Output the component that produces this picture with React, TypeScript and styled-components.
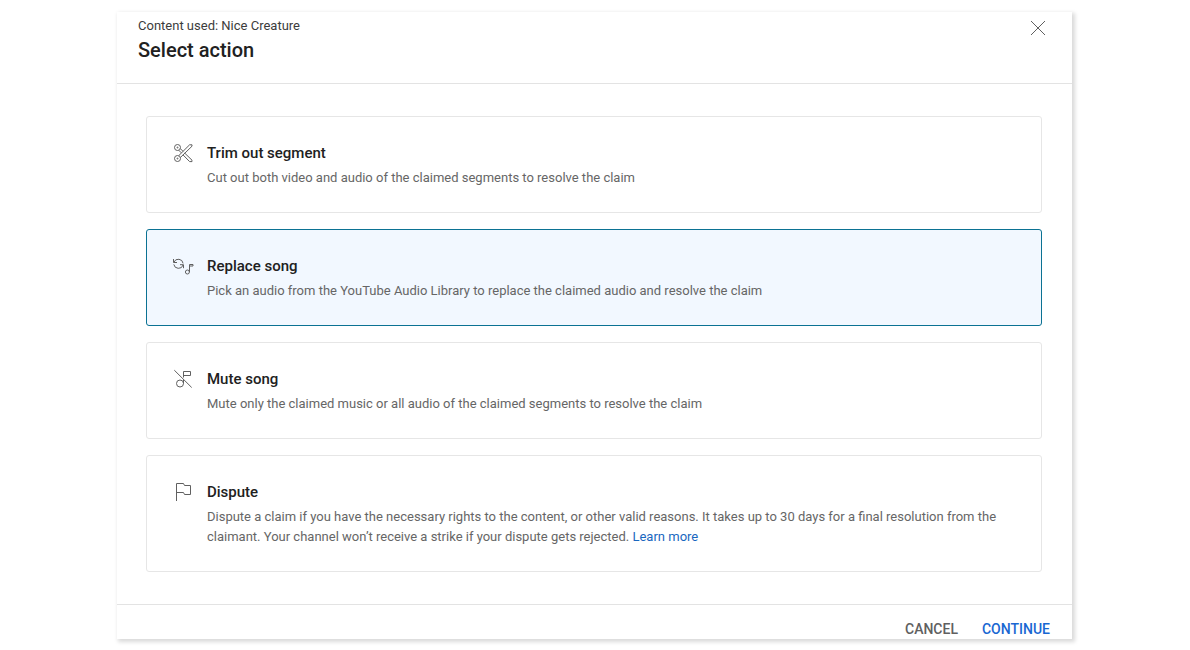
import React, { useState } from "react";
import styled, { createGlobalStyle } from "styled-components";

const GlobalStyle = createGlobalStyle`
  *, *::before, *::after { box-sizing: border-box; }
  body {
    margin: 0;
    background: #fff;
    color: #212121;
    font-family: Roboto, "Liberation Sans", sans-serif;
    font-size: 13px;
    line-height: 20px;
  }
`;

const Page = styled.main`
  padding: 12px 17px 10px 16px;
`;

const Dialog = styled.section`
  max-width: 955px;
  margin: 0 auto;
  background: #fff;
  box-shadow: 2px 2px 4px 1px rgba(0, 0, 0, 0.15);
`;

const Header = styled.header`
  display: flex;
  justify-content: space-between;
  align-items: flex-start;
  padding: 4px 22px 19px 21px;
  border-bottom: 1px solid #e3e3e3;
`;

const Context = styled.p`
  margin: 0;
  color: #3c3c3c;
`;

const Heading = styled.h1`
  margin: 0;
  font-size: 20px;
  font-weight: 500;
  line-height: 28px;
`;

const CloseButton = styled.button`
  display: flex;
  padding: 0;
  border: 0;
  background: none;
  color: #606060;
  cursor: pointer;
`;

const Options = styled.form`
  display: flex;
  flex-direction: column;
  gap: 16px;
  padding: 32px 30px 32px 29px;
`;

const Card = styled.label<{ $selected: boolean }>`
  position: relative;
  display: flex;
  gap: 12px;
  padding: 24px;
  border: 1px solid ${(p) => (p.$selected ? "#0b7293" : "#e6e6e6")};
  border-radius: 3px;
  background: ${(p) => (p.$selected ? "#f2f8ff" : "#fff")};
  cursor: pointer;
`;

const Radio = styled.input`
  position: absolute;
  opacity: 0;
  pointer-events: none;
`;

const Icon = styled.svg`
  flex: none;
  width: 24px;
  height: 24px;
  fill: none;
  stroke: currentColor;
  stroke-width: 1;
  color: #606060;
`;

const CardText = styled.span`
  display: flex;
  flex-direction: column;
  gap: 3px;
`;

const CardTitle = styled.span`
  font-size: 15px;
  font-weight: 500;
  line-height: 24px;
`;

const Description = styled.span`
  color: #666;
`;

const Link = styled.a`
  color: #1967c0;
  text-decoration: none;
`;

const Footer = styled.footer`
  display: flex;
  justify-content: flex-end;
  gap: 24px;
  padding: 14px 22px 0;
  border-top: 1px solid #e3e3e3;
`;

const ActionButton = styled.button<{ $primary?: boolean }>`
  padding: 0;
  border: 0;
  background: none;
  color: ${(p) => (p.$primary ? "#1967d2" : "#606060")};
  font: 500 14px/20px Roboto, "Liberation Sans", sans-serif;
  text-transform: uppercase;
  cursor: pointer;
`;

const icons = {
  trim: (
    <>
      <circle cx="6.5" cy="6.5" r="3" />
      <circle cx="6.5" cy="17.5" r="3" />
      <circle cx="6.5" cy="6.5" r="0.5" />
      <circle cx="6.5" cy="17.5" r="0.5" />
      <path d="M7.7 14.7 18.6 3.8H21V5.2L9.3 16.6M9.3 7.6 12 10.3M7.8 9.3 10.3 11.8M13.7 12.1 21 19.2V20.6H18.6L12 13.9" />
    </>
  ),
  replace: (
    <>
      <path d="M2.5 5V8.5H6M2.9 8.2A4.8 4.8 0 0 1 12.1 9.4M12.5 14.2V10.7H9M12.1 11A4.8 4.8 0 0 1 2.8 10.4" />
      <circle cx="16.4" cy="18" r="2" />
      <path d="M18.5 18V10.5H22V12H18.5" />
    </>
  ),
  mute: (
    <>
      <path d="M3.3 3.2 20.7 20.5M12.5 10.5V4.5H19.5V8.5H12.5M12.5 12.5V16.5" />
      <circle cx="9" cy="16.5" r="3.5" />
    </>
  ),
  dispute: <path d="M5.5 21V3.5H12.5L13.5 5.5H19.5V14.5H13.5L12.5 12.5H5.5" />,
};

type Action = keyof typeof icons;

const options: { id: Action; title: string; text: string; link?: string }[] = [
  {
    id: "trim",
    title: "Trim out segment",
    text: "Cut out both video and audio of the claimed segments to resolve the claim",
  },
  {
    id: "replace",
    title: "Replace song",
    text: "Pick an audio from the YouTube Audio Library to replace the claimed audio and resolve the claim",
  },
  {
    id: "mute",
    title: "Mute song",
    text: "Mute only the claimed music or all audio of the claimed segments to resolve the claim",
  },
  {
    id: "dispute",
    title: "Dispute",
    text: "Dispute a claim if you have the necessary rights to the content, or other valid reasons. It takes up to 30 days for a final resolution from the claimant. Your channel won’t receive a strike if your dispute gets rejected.",
    link: "Learn more",
  },
];

export default function App() {
  const [selected, setSelected] = useState<Action>("replace");
  return (
    <>
      <GlobalStyle />
      <Page>
        <Dialog role="dialog" aria-labelledby="dialog-title">
          <Header>
            <div>
              <Context>Content used: Nice Creature</Context>
              <Heading id="dialog-title">Select action</Heading>
            </div>
            <CloseButton type="button" aria-label="Close">
              <Icon viewBox="0 0 24 24" aria-hidden="true">
                <path d="M5 5 19 19M19 5 5 19" />
              </Icon>
            </CloseButton>
          </Header>
          <Options id="claim-action">
            {options.map((o) => (
              <Card key={o.id} htmlFor={o.id} $selected={selected === o.id}>
                <Radio
                  type="radio"
                  name="action"
                  id={o.id}
                  checked={selected === o.id}
                  onChange={() => setSelected(o.id)}
                />
                <Icon viewBox="0 0 24 24" aria-hidden="true">
                  {icons[o.id]}
                </Icon>
                <CardText>
                  <CardTitle>{o.title}</CardTitle>
                  <Description>
                    {o.text}
                    {o.link && (
                      <>
                        {" "}
                        <Link href="#learn-more">{o.link}</Link>
                      </>
                    )}
                  </Description>
                </CardText>
              </Card>
            ))}
          </Options>
          <Footer>
            <ActionButton type="button">Cancel</ActionButton>
            <ActionButton type="submit" form="claim-action" $primary>
              Continue
            </ActionButton>
          </Footer>
        </Dialog>
      </Page>
    </>
  );
}
